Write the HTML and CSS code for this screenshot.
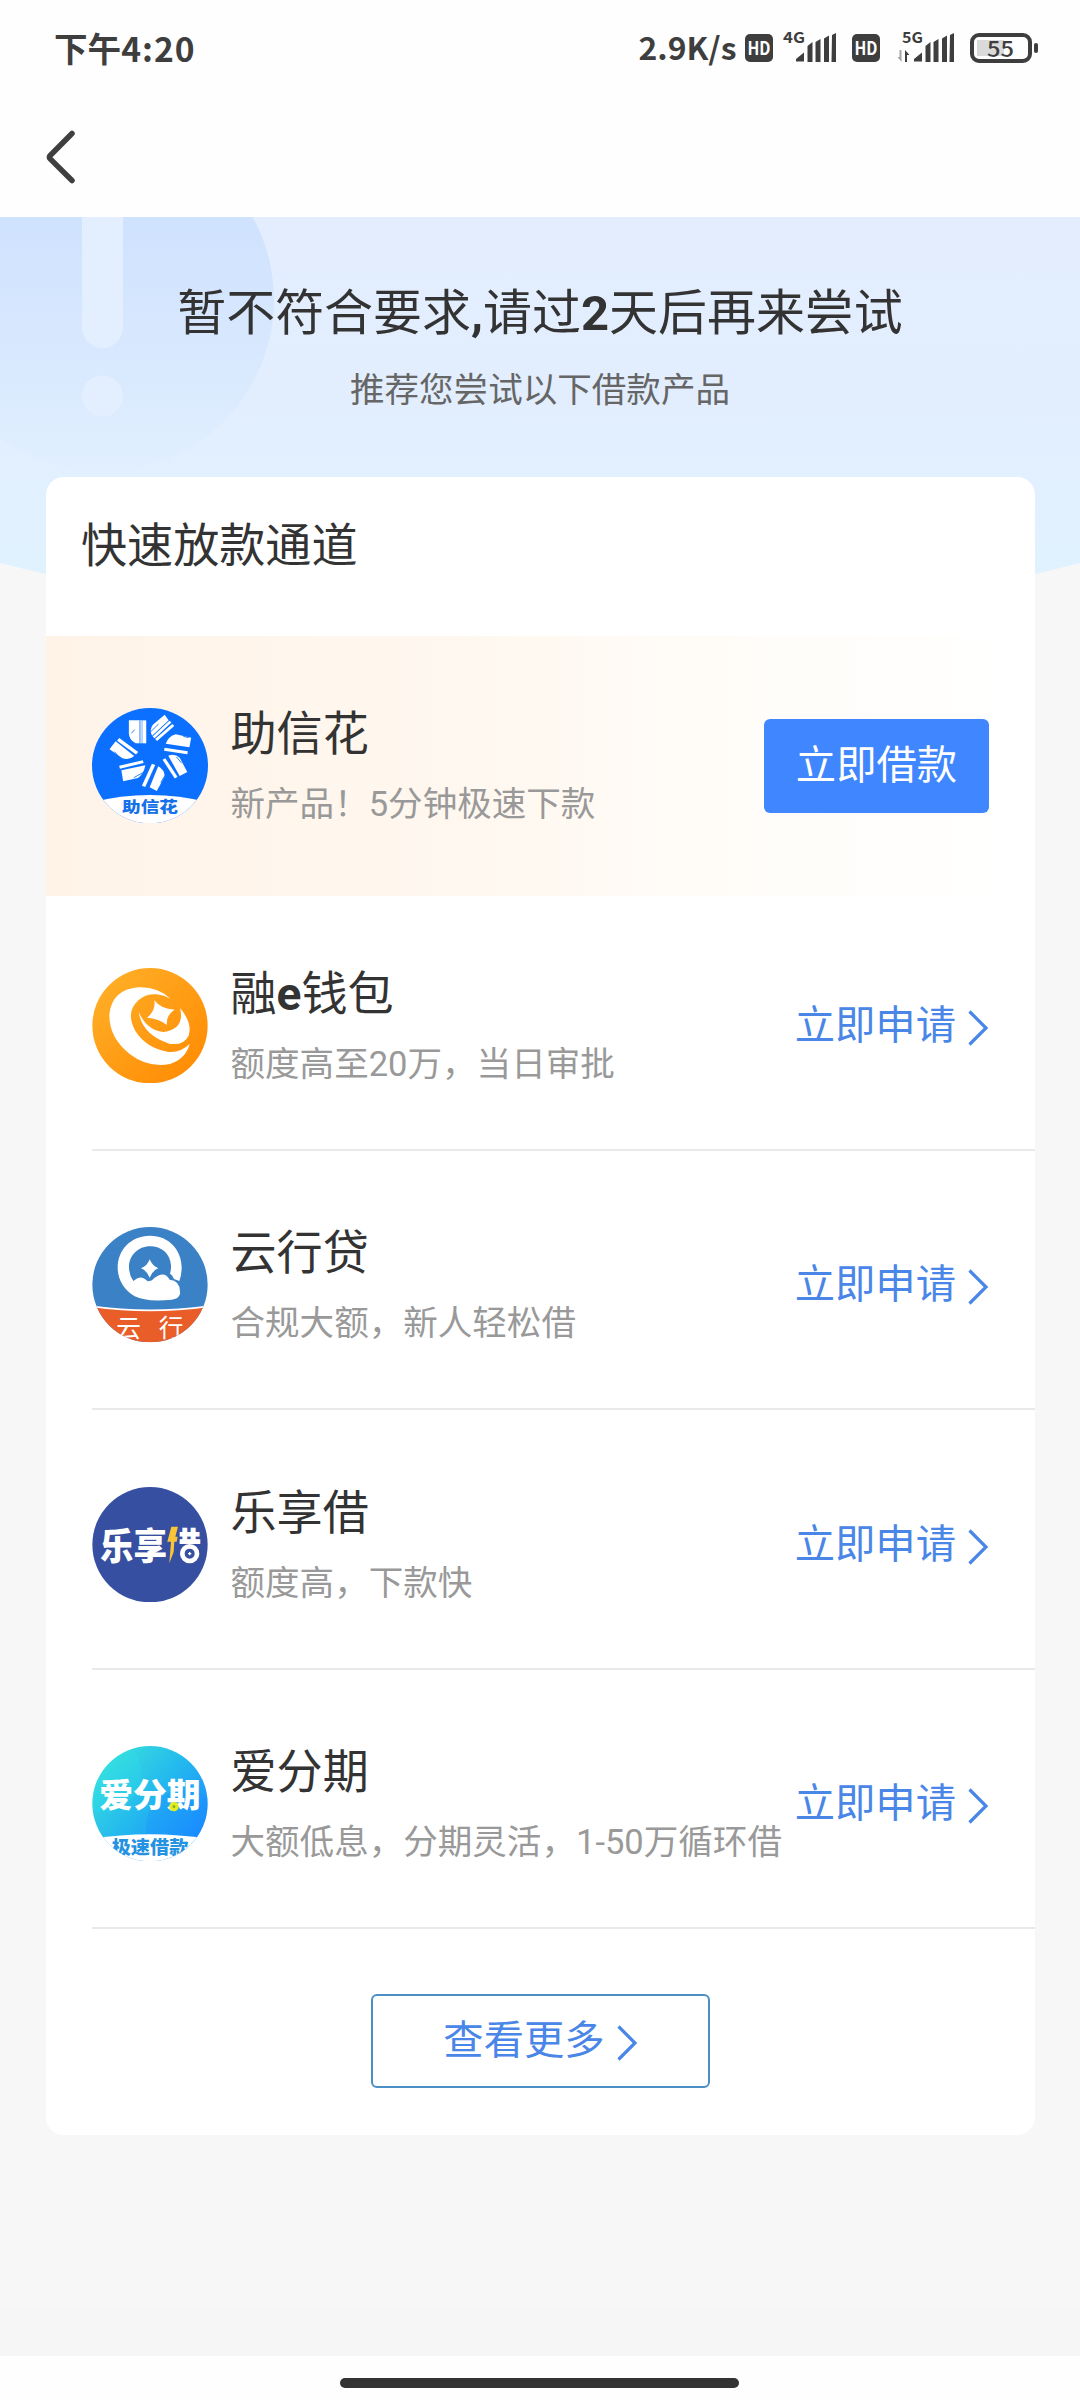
FILE: index.html
```html
<!DOCTYPE html>
<html lang="zh-CN">
<head>
<meta charset="utf-8">
<title>快速放款通道</title>
<link rel="stylesheet" href="styles.css">
</head>
<body>
<svg class="defs" width="0" height="0" aria-hidden="true">
  <symbol id="arrow" viewBox="0 0 22 38"><path d="M2.5 2.5 19 19 2.5 35.5" fill="none" stroke="currentColor" stroke-width="3.2"/></symbol>
</svg>

<header class="top">
  <div class="status">
    <span class="clock">下午<span class="digits">4:20</span></span>
    <svg class="indicators" width="420" height="60" viewBox="620 20 420 60">
      <text x="638.500" y="59.500" class="speed" textLength="98" lengthAdjust="spacingAndGlyphs">2.9K/s</text>
      <g fill="#3e3e3e">
        <rect x="745" y="34" width="28" height="28" rx="5"/>
        <rect x="852" y="34" width="28" height="28" rx="5"/>
        <path id="bars" d="M796 61.500V59l8-6.500v9ZM807.500 46l5-4v20h-5ZM815.500 42l5-3v23h-5ZM824 38.500l5-3V62h-5ZM832 35l4-2V62h-4.500Z"/>
        <use href="#bars" x="118"/>
        <path d="M905 50l4.500 5h-2.500v7h-2Z"/>
        <path d="M899.500 50h2v12l-4-5h2Z" fill="#a5a5a5"/>
        <rect x="1034" y="43" width="4" height="10" rx="2"/>
      </g>
      <text x="747.500" y="54.500" class="hd" textLength="23" lengthAdjust="spacingAndGlyphs">HD</text>
      <text x="854.500" y="54.500" class="hd" textLength="23" lengthAdjust="spacingAndGlyphs">HD</text>
      <text x="783" y="42.500" class="net" textLength="22" lengthAdjust="spacingAndGlyphs">4G</text>
      <text x="902" y="42.500" class="net" textLength="21" lengthAdjust="spacingAndGlyphs">5G</text>
      <rect x="977" y="40" width="27" height="16" fill="#dadada"/>
      <rect x="972" y="35" width="58" height="26" rx="7" fill="none" stroke="#3e3e3e" stroke-width="4"/>
      <text x="987" y="56.500" class="charge" textLength="27" lengthAdjust="spacingAndGlyphs">55</text>
    </svg>
  </div>
  <div class="nav">
    <svg class="back" width="32" height="56" viewBox="0 0 32 56"><path d="M27 4.500 5.200 26.500q-1.700 1.700 0 3.400L27 51.500" fill="none" stroke="#3f3f3f" stroke-width="5.500" stroke-linecap="round"/></svg>
  </div>
</header>

<main class="page">
  <svg class="hero-bg" width="1080" height="420" viewBox="0 217 1080 420">
    <defs>
      <linearGradient id="sky" x1="0" y1="0" x2="0" y2="1"><stop offset="0" stop-color="#e3edfd"/><stop offset=".45" stop-color="#e2eefe"/><stop offset="1" stop-color="#e0f3ff"/></linearGradient>
      <linearGradient id="disc" x1="0" y1="217" x2="0" y2="471" gradientUnits="userSpaceOnUse"><stop offset="0" stop-color="#cfe2fe"/><stop offset=".6" stop-color="#d9e9fe"/><stop offset="1" stop-color="#e1effe"/></linearGradient>
    </defs>
    <path d="M0 217H1080V563Q540 703 0 563Z" fill="url(#sky)"/>
    <circle cx="102" cy="300" r="172" fill="url(#disc)"/>
    <rect x="82" y="150" width="41" height="198" rx="20.500" fill="#e3effe"/>
    <circle cx="102.500" cy="396" r="20.500" fill="#e3effe"/>
  </svg>
  <div class="hero">
    <h1>暂不符合要求<b>,</b>请过<b>2</b>天后再来尝试</h1>
    <p>推荐您尝试以下借款产品</p>
  </div>

  <section class="card">
    <h2>快速放款通道</h2>

    <article class="row featured">
      <svg class="logo" viewBox="34 54 324 346" preserveAspectRatio="none">
        <defs><clipPath id="c1"><ellipse cx="196" cy="227" rx="162" ry="173"/></clipPath></defs>
        <g clip-path="url(#c1)">
          <path d="M34 54h324v346H34Z" fill="#0b70ff"/>
          <path d="M34 337Q196 293 358 337V400H34Z" fill="#fff"/>
        </g>
        <g stroke="#fff" fill="#fff">
          <path stroke="none" d="M137 91h36v69h-17q-19-10-19-30Z"/><path d="M180 91v69" stroke-width="11"/>
          <path stroke="none" d="M237 74l11 17-46 46q-9-17 2-33Z"/><path d="M261 105l-48 45M253 95l-47 47" stroke-width="8"/>
          <path stroke="none" d="M311 143l-5 29-66-11q8-23 28-28Z"/><path d="M236 178l65 10" stroke-width="9"/>
          <path stroke="none" d="M300 246l-21 12-32-61q18-7 32 6Z"/><path d="M235 207l34 56" stroke-width="9"/>
          <path stroke="none" d="M215 303l-20-11 24-63q20 12 17 32Z"/><path d="M206 223l-28 66" stroke-width="10"/>
          <path stroke="none" d="M121 274l-5-33 67-15q-4 26-21 38Z"/><path d="M111 232l66-17" stroke-width="9"/>
          <path stroke="none" d="M83 178l17-24 52 44q-15 14-33 7Z"/><path d="M107 148l53 42" stroke-width="10"/>
        </g>
        <path d="M168 91v69M144 130l9-11M199 124l21-22M289 139l15 4M270 201l14 18M226 278l11-20M151 263l25-15M97 185l9 12" stroke="#0b70ff" stroke-width="2.500"/>
        <text x="118" y="367" font-size="46" class="lt" fill="#1671e8" textLength="156" lengthAdjust="spacingAndGlyphs">助信花</text>
      </svg>
      <div class="info"><h3>助信花</h3><p>新产品！5分钟极速下款</p></div>
      <button class="primary">立即借款</button>
    </article>

    <article class="row">
      <svg class="logo" viewBox="156 23 348 346">
        <defs><linearGradient id="g2" x1="0" y1="0" x2="1" y2="1"><stop offset="0" stop-color="#ffb22b"/><stop offset="1" stop-color="#ff8800"/></linearGradient></defs>
        <circle cx="330" cy="196" r="173" fill="url(#g2)"/>
        <g fill="#fff">
          <path d="M391 115Q352 78 295 81Q215 88 208 163Q207 232 270 282Q325 324 390 311Q437 296 449 251Q420 279 382 274Q319 263 286 212Q260 164 285 131Q310 98 350 102Q374 105 391 115Z"/>
          <path d="M420 143Q458 187 446 226Q431 257 388 250Q307 224 296 155Q321 211 371 215Q436 205 420 143Z"/>
          <path d="M343 120Q362 146 404 148Q377 166 381 194Q356 174 321 172Q348 150 343 120Z"/>
        </g>
      </svg>
      <div class="info"><h3>融<b>e</b>钱包</h3><p>额度高至20万，当日审批</p></div>
      <a class="apply">立即申请<svg><use href="#arrow"/></svg></a>
    </article>

    <article class="row">
      <svg class="logo" viewBox="156 800 348 346">
        <defs><clipPath id="c3"><circle cx="330" cy="973" r="173"/></clipPath></defs>
        <g clip-path="url(#c3)">
          <path d="M156 800h348v346H156Z" fill="#3a81c5"/>
          <path d="M156 1041Q330 1058 504 1041V1146H156Z" fill="#e95d28"/>
          <path d="M156 1038Q330 1062 504 1038" stroke="#fff" stroke-width="5" fill="none"/>
          <text x="229" y="1129" font-size="74" class="thin" fill="#fff">云</text>
          <text x="356" y="1129" font-size="74" class="thin" fill="#fff">行</text>
        </g>
        <path fill="#fff" d="M330 826C388 826 425 870 425 922Q425 944 418 962L402 956Q397 943 390 940Q394 926 393 915C390 880 365 858 330 858C295 858 267 885 267 920Q267 944 280 962Q302 940 323 963Q336 963 342 954Q373 929 389 958Q423 961 420 1001Q416 1016 395 1018Q320 1026 284 1008C250 988 233 955 233 922C233 868 273 826 330 826Z"/>
        <path fill="#fff" d="M329 897Q337 917 355 924Q336 932 329 952Q322 932 303 924Q322 917 329 897Z"/>
      </svg>
      <div class="info"><h3>云行贷</h3><p>合规大额，新人轻松借</p></div>
      <a class="apply">立即申请<svg><use href="#arrow"/></svg></a>
    </article>

    <article class="row">
      <svg class="logo" viewBox="156 20 348 346">
        <circle cx="330" cy="193" r="173" fill="#364fa1"/>
        <g transform="translate(180 0) scale(.9 1)"><text x="0" y="238" font-size="112" class="lt" fill="#fff">乐享借</text></g>
        <path d="M382 130h37v126h-37ZM410 197h70v60h-70Z" fill="#364fa1"/>
        <circle cx="449" cy="220" r="22" fill="none" stroke="#fff" stroke-width="14"/>
        <path d="M449 215v10M444 220h10" stroke="#fff" stroke-width="4"/>
        <path d="M394 139h20l-8 30h7l-3 15h-7l-2 31-13 34 5-65h-11Z" fill="#fbc437"/>
      </svg>
      <div class="info"><h3>乐享借</h3><p>额度高，下款快</p></div>
      <a class="apply">立即申请<svg><use href="#arrow"/></svg></a>
    </article>

    <article class="row">
      <svg class="logo" viewBox="156 797 348 346">
        <defs>
          <linearGradient id="g5" x1=".1" y1=".1" x2=".9" y2=".8"><stop offset="0" stop-color="#38e0dc"/><stop offset=".5" stop-color="#24b9ee"/><stop offset="1" stop-color="#1b8cff"/></linearGradient>
          <clipPath id="c5"><circle cx="330" cy="970" r="173"/></clipPath>
        </defs>
        <g clip-path="url(#c5)">
          <path d="M156 797h348v346H156Z" fill="url(#g5)"/>
          <circle cx="190" cy="880" r="115" fill="#2ee4ec" opacity=".22"/>
          <circle cx="430" cy="1040" r="112" fill="#188aff" opacity=".25"/>
          <path d="M156 1076Q330 1048 504 1076V1146H156Z" fill="#fff"/>
          <text x="215" y="1121" font-size="54" class="lt" fill="#2592e2" textLength="230" lengthAdjust="spacingAndGlyphs">极速借款</text>
        </g>
        <text x="178" y="981" font-size="98" class="lt" fill="#fff" textLength="304" lengthAdjust="spacingAndGlyphs">爱分期</text>
        <circle cx="402" cy="979" r="14" fill="#e3eb20"/><circle cx="402" cy="979" r="4" fill="#77ad2d"/>
      </svg>
      <div class="info"><h3>爱分期</h3><p>大额低息，分期灵活，1-50万循环借</p></div>
      <a class="apply">立即申请<svg><use href="#arrow"/></svg></a>
    </article>

    <button class="more">查看更多<svg><use href="#arrow"/></svg></button>
  </section>
</main>

<footer class="gesture"><span></span></footer>
</body>
</html>
```
FILE: styles.css
```css
* { box-sizing: border-box; margin: 0; padding: 0; }
body {
  width: 1080px;
  height: 2400px;
  display: flex;
  flex-direction: column;
  background: #fff;
  color: #333;
  font-family: Roboto, "Noto Sans CJK SC", sans-serif;
  overflow: hidden;
}
.defs { position: absolute; }
h1, h2, h3 { font-weight: 400; white-space: nowrap; }
b { font-weight: 700; }

.top { height: 217px; background: #fefefe; }
.status {
  height: 98px;
  padding: 0 40px 0 54px;
  display: flex;
  justify-content: space-between;
  align-items: center;
}
.clock {
  margin-top: -3px;
  font: 700 33.6px/50px "Noto Sans CJK SC", sans-serif;
  color: #3e3e3e;
}
.digits { letter-spacing: 1px; }
.indicators { margin-top: 2px; }
.indicators text { font-family: "Noto Sans CJK SC", sans-serif; fill: #3e3e3e; }
.speed { font-size: 31px; font-weight: 700; }
.indicators .hd { font-size: 18px; font-weight: 700; fill: #fff; }
.net { font-size: 15px; font-weight: 700; }
.charge { font-size: 22px; font-weight: 500; }
.nav { height: 119px; padding: 31px 0 0 45px; }
.back { display: block; }

.page {
  height: 2139px;
  position: relative;
  background: linear-gradient(#f7f7f7 2091px, #f6f6f6 2091px);
}
.hero-bg { position: absolute; left: 0; top: 0; }
.hero {
  position: relative;
  height: 260px;
  padding-top: 62px;
  text-align: center;
}
.hero h1 { font-size: 48.96px; line-height: 70px; }
.hero p { margin-top: 16px; font-size: 34.56px; line-height: 50px; color: #666; }

.card {
  position: relative;
  margin: 0 45px 0 46px;
  height: 1657.5px;
  border-radius: 18px;
  background: #fff;
}
.card h2 {
  height: 159px;
  padding: 36px 0 0 35px;
  font-size: 46.08px;
  line-height: 66px;
}
.row {
  height: 255.200px;
  margin: 0 0 4.200px 46px;
  padding: 72.300px 46px 0 0;
  display: flex;
  align-items: flex-start;
  border-bottom: 2px solid #e9e9e9;
}
.row.featured {
  height: 259.600px;
  margin: 0;
  padding-top: 71.600px;
  padding-left: 46px;
  border: 0;
  background: linear-gradient(90deg, #fff3e8, #fff8f0 45%, #fffdfa 75%, #fff);
}
.logo { flex: none; width: 116px; height: 115.300px; }
.lt { font-family: "Noto Sans CJK SC", sans-serif; font-weight: 900; }
.thin { font-family: "Noto Sans CJK SC", sans-serif; font-weight: 400; }
.info { flex: 1; min-width: 0; padding-left: 22.500px; white-space: nowrap; }
.info h3 { font-size: 46.08px; line-height: 66px; margin-top: -7px; }
.info p { margin-top: 12px; font-size: 34.56px; line-height: 50px; color: #999; }
button { font-family: inherit; font-size: 40.32px; line-height: 60px; }
.primary {
  width: 225px;
  height: 94px;
  margin-top: 11px;
  border: 0;
  border-radius: 6px;
  background: #4086ff;
  color: #fff;
}
.apply {
  display: flex;
  align-items: center;
  margin-top: 28px;
  font-size: 40.32px;
  line-height: 60px;
  color: #4a86e8;
}
.apply svg, .more svg { width: 22px; height: 38px; margin: 4px 0 0 11px; }
.more {
  display: flex;
  align-items: center;
  justify-content: center;
  width: 339px;
  height: 94px;
  margin: 65px auto 0;
  border: 2px solid #4c8fc4;
  border-radius: 6px;
  background: #fff;
  color: #4a86e8;
}
.gesture { height: 44px; display: flex; justify-content: center; background: #fefefe; }
.gesture span { width: 399px; height: 10px; margin: 22px 2px 0 0; border-radius: 5px; background: #333; }
```
